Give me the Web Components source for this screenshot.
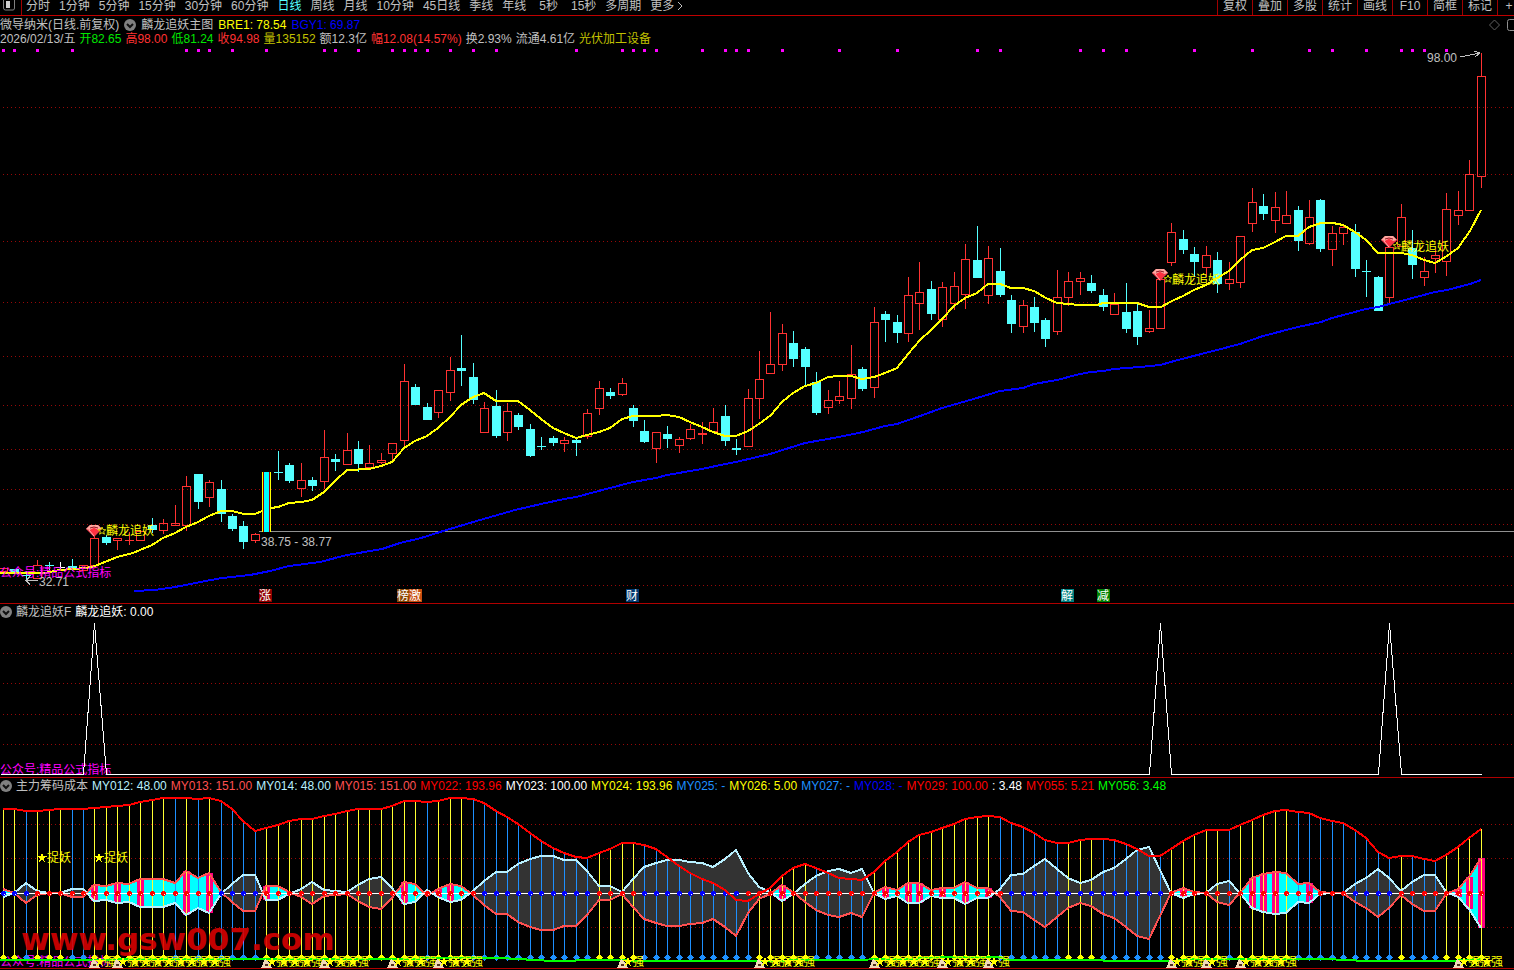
<!DOCTYPE html>
<html lang="zh-CN">
<head>
<meta charset="utf-8">
<title>微导纳米 日线</title>
<style>
  html { background: #000; }
  body { margin: 0; background: #000; color: #c0c0c0; font: 12px/14px "Liberation Sans", "Noto Sans CJK SC", sans-serif; overflow-x: hidden; }
</style>
</head>
<body>
<stock-app></stock-app>
<script>
const define = (name, cls) => customElements.define(name, cls);
class Base extends HTMLElement {
  constructor() {
    super();
    this.attachShadow({ mode: 'open' }).innerHTML = this.constructor.markup;
  }
}

/* ---------- toolbar ---------- */
const periods = ['分时','1分钟','5分钟','15分钟','30分钟','60分钟','日线','周线','月线','10分钟','45日线','季线','年线','5秒','15秒','多周期','更多'];
const tools = ['复权','叠加','多股','统计','画线','F10','简框','标记','+自'];
define('period-bar', class extends Base {
  static markup = `<style>
    :host { display: flex; height: 15px; border-bottom: 1px solid #c00000; overflow: hidden; justify-content: space-between; align-items: flex-start; }
    button { font: inherit; line-height: 10px; color: inherit; background: none; border: 0; padding: 0; margin: 0; white-space: nowrap; }
    .side { width: 21px; height: 15px; border-right: 1px solid #a00000; box-sizing: content-box; }
    .side svg { display: block; }
    .left, nav, .tools { display: flex; }
    nav { gap: 9px; padding-left: 4px; align-items: flex-start; }
    nav button { height: 11px; }
    nav button.wide { padding: 0 4px; }
    nav button[aria-current] { color: #54ffff; }
    nav button svg { vertical-align: -1px; margin-left: 2px; }
    .tools { margin-right: -18px; }
    .tools button { width: 35px; height: 15px; padding-bottom: 3px; border-left: 1px solid #a00000; }
  </style>
  <div class="left"><button class="side" aria-label="侧栏"><svg width="20" height="15"><path d="M3.500 0V8q0 2 2 2H13q1.500 0 1.500-2V0" fill="none" stroke="#808080"/><rect x="6" y="1" width="4" height="7" fill="#d0d0d0"/></svg></button>
  <nav>${periods.map(p => `<button${p === '日线' ? ' aria-current="true"' : ''}${p === '5秒' ? ' class="wide"' : ''}>${p}${p === '更多' ? '<svg width="8" height="10"><path d="M2 1l4 4-4 4" fill="none" stroke="#c0c0c0"/></svg>' : ''}</button>`).join('')}</nav></div>
  <div class="tools">${tools.map(t => `<button>${t}</button>`).join('')}</div>`;
});

/* ---------- coloured value in a header ---------- */
define('data-value', class extends Base {
  static markup = `<style>:host { display: inline-block; white-space: pre; color: var(--tone, #c0c0c0); }</style><slot></slot>`;
  connectedCallback() { const t = this.getAttribute('tone'); if (t) this.style.setProperty('--tone', t); }
});

define('fold-button', class extends Base {
  static markup = `<style>:host { display: block; width: 12px; height: 12px; }
    button { display: block; border: 0; padding: 0; background: none; }
    svg { display: block; }</style>
    <button aria-label="展开"><svg width="12" height="12"><circle cx="6" cy="6" r="6" fill="#808080"/><path d="M3 5l3 3 3-3" fill="none" stroke="#101010" stroke-width="2"/></svg></button>`;
});

define('chart-panel', class extends Base {
  static markup = `<style>
    :host { display: block; border-bottom: 1px solid #b00000; position: relative; }
    header { display: flex; flex-direction: column; }
  </style><header><slot name="head"></slot></header><slot></slot>`;
});
define('head-row', class extends Base {
  static markup = `<style>
    :host { display: flex; align-items: center; height: 16px; gap: 4px; white-space: nowrap; }
    :host([tight]) { height: 14px; }
    :host([top]) { padding-top: 2px; height: 14px; gap: 5px; }
    .end { margin-left: auto; display: flex; }
  </style><slot></slot><span class="end"><slot name="end"></slot></span>`;
});

/* ---------- drawing helpers ---------- */
const COUNT = 130;
const FIRST = 3;
const RIGHT_MARGIN = 33;
const poly = (pts, attrs) => `<polyline points="${pts.map(p => p.join(',')).join(' ')}" fill="none" ${attrs}/>`;
const label = (x, y, s, fill, extra = '') => `<text x="${x}" y="${y}" fill="${fill}" ${extra}>${s}</text>`;
const star = (x, y, r, attrs) => {
  const p = [];
  for (let k = 0; k < 10; k++) {
    const q = k % 2 ? r * 0.42 : r, a = -Math.PI / 2 + k * Math.PI / 5;
    p.push((x + q * Math.cos(a)).toFixed(1) + ',' + (y + q * Math.sin(a)).toFixed(1));
  }
  return `<polygon points="${p.join(' ')}" ${attrs}/>`;
};

class Chart extends Base {
  static markup = `<style>
    :host { display: block; overflow: hidden; }
    svg { display: block; width: 100%; overflow: hidden; shape-rendering: crispEdges; font: 12px "Liberation Sans", "Noto Sans CJK SC", sans-serif; }
  </style><svg></svg>`;
  connectedCallback() {
    this.render();
    new ResizeObserver(() => this.render()).observe(this);
  }
  render() {
    const w = this.clientWidth || innerWidth;
    if (w === this.drawn) return;
    this.drawn = w;
    this.w = w;
    this.step = (w - FIRST - RIGHT_MARGIN) / (COUNT - 1);
    this.scale = (w - FIRST - RIGHT_MARGIN) / 1478;
    const svg = this.shadowRoot.querySelector('svg');
    const [top, height] = this.range;
    svg.setAttribute('height', height);
    svg.setAttribute('viewBox', `0 ${top} ${w} ${height}`);
    svg.innerHTML = this.draw();
  }
  bar(i) { return Math.floor(FIRST + i * this.step + 1 / 3); }
  at(x) { return Math.round(FIRST + (x - FIRST) * this.scale); }
  grid(rows) {
    return rows.map(y => `<line x1="3" x2="${this.w}" y1="${y}.5" y2="${y}.5" stroke="#980808" stroke-dasharray="1 3"/>`).join('');
  }
}

/* each candle: kind, high, body top, body bottom, low */
const candles = `r 568 568 572 572|c 569 569 573 573|c 571 575 576 579|r 560 565 579 579|c 562 565 566 570|w 562 567 568 571|c 559 566 569 571|r 565 565 571 571|r 531 538 566 566|c 535 537 543 545|r 538 538 541 550|r 532 540 541 545|r 531 531 541 541|c 518 525 530 533|r 519 523 531 534|r 505 523 526 526|r 476 486 526 531|c 474 474 502 509|r 480 482 498 507|c 480 489 514 522|c 514 516 529 531|c 521 526 542 549|r 533 534 541 543|x 472 472 532 532|c 451 472 473 480|c 463 465 481 483|r 463 480 489 497|c 477 480 486 491|r 430 457 482 489|c 454 459 462 471|r 433 450 465 465|c 441 449 464 472|r 445 463 468 468|r 453 460 463 464|r 443 443 454 461|r 364 381 441 448|c 384 387 405 405|c 403 407 420 420|r 390 390 413 418|r 357 370 393 401|c 335 368 371 386|c 363 377 400 404|r 402 408 433 433|c 390 406 436 438|r 403 411 433 441|c 413 415 427 430|c 424 429 456 457|c 437 446 447 450|c 436 438 443 446|r 437 440 444 452|c 438 440 443 456|r 409 413 437 439|r 381 388 409 415|c 388 392 396 399|r 378 383 395 396|c 405 408 421 427|c 420 431 442 443|r 432 432 449 463|c 426 434 439 448|r 437 439 446 453|r 424 429 439 440|r 422 433 435 444|r 408 422 432 432|c 405 416 441 446|c 439 448 450 455|r 389 398 447 447|r 351 379 399 419|r 312 364 374 374|r 324 333 365 371|c 331 343 359 367|c 347 349 367 386|c 372 382 413 415|r 390 400 408 414|r 381 396 401 404|r 345 374 399 409|c 367 369 389 391|r 307 322 388 398|c 311 314 320 342|c 315 322 333 343|r 277 295 334 342|r 262 292 304 330|c 281 289 314 320|r 282 287 320 327|r 272 286 304 310|r 244 259 295 309|c 226 260 278 278|r 246 258 296 304|c 248 271 295 297|c 295 300 324 333|r 300 305 327 333|c 297 307 323 332|c 318 320 339 347|r 270 297 332 335|r 272 281 298 306|r 272 278 282 295|c 275 283 291 293|c 289 295 307 311|r 293 304 315 315|c 283 312 329 333|c 303 311 337 345|r 310 328 332 333|r 279 279 329 329|r 223 232 263 266|c 230 239 250 254|c 247 254 262 277|r 246 255 268 277|c 252 260 284 293|r 262 279 284 290|r 236 236 283 288|r 188 202 224 232|c 194 206 214 220|r 192 207 221 233|r 191 215 224 224|c 206 210 241 251|r 200 217 244 245|c 199 200 249 252|r 226 233 250 266|r 225 227 234 245|c 224 232 269 277|c 260 271 272 297|c 276 277 311 311|r 247 247 298 303|r 204 217 247 247|c 230 248 265 279|r 257 271 278 286|r 250 255 259 273|r 193 209 262 276|r 191 210 216 225|r 160 174 211 211|r 53 76 177 188`
  .split('|').map(s => { const [k, ...n] = s.split(' '); return [k, ...n.map(Number)]; });
const pairs = s => s.trim().split(/\s+/).map(p => p.split(',').map(Number));
const fastLine = pairs(`0,573 44,573 60,570 72,569 86,568 95,566 117,557 133,553 152,545 163,538 175,533 186,527 198,522 209,516 221,511 232,511 244,514 255,514 262,511 271,508 278,507 289,503 301,502 312,500 324,492 335,481 347,470 369,469 381,466 392,462 404,448 415,441 427,436 438,428 450,417 461,405 473,397 484,393 496,401 518,401 530,410 541,419 553,428 564,433 576,438 587,435 599,432 610,428 622,419 633,416 656,416 667,415 679,417 690,422 702,427 713,432 725,436 736,436 748,431 759,424 771,415 782,402 793,393 805,386 816,383 828,377 839,376 851,376 862,379 874,377 885,373 897,368 908,354 920,340 931,330 942,319 954,306 965,298 977,293 988,284 1000,284 1011,288 1023,288 1034,291 1046,298 1057,303 1080,305 1097,305 1103,303 1137,303 1149,307 1161,307 1172,301 1183,296 1194,290 1206,285 1217,278 1229,271 1240,260 1252,250 1263,248 1275,242 1286,236 1298,236 1309,227 1321,223 1333,223 1343,225 1355,232 1366,240 1378,253 1401,253 1412,255 1424,260 1435,263 1447,256 1458,248 1470,231 1481,210`);
const slowLine = pairs(`134,591 155,590 175,587 211,580 222,578 250,575 270,571 289,566 320,562 347,555 382,549 400,543 421,538 440,532 480,520 515,510 541,504 564,499 576,497 610,488 633,482 656,478 667,475 702,469 725,464 736,462 770,454 805,443 839,437 863,432 885,426 897,424 920,416 942,408 977,398 1000,391 1023,388 1034,384 1057,380 1080,374 1091,372 1103,371 1114,369 1140,367 1160,365 1178,360 1217,350 1240,344 1263,336 1298,327 1321,322 1332,318 1366,309 1378,307 1401,301 1435,292 1447,290 1470,284 1481,280`);
const topDots = [0,1,3,6,16,17,18,20,23,28,29,31,34,35,36,37,39,41,43,50,54,55,56,57,61,63,64,65,68,73,78,85,87,94,96,98,104,109,114,116,119,122,123,124,126];

define('candle-chart', class extends Chart {
  range = [46, 557];
  gem(x, y) {
    return `<g shape-rendering="auto" transform="translate(${x - 8} ${y - 6})"><path d="M0 4L4 0H12L16 4L8 12Z" fill="#f03848"/><path d="M0 4L4 0H12L16 4L12 5L8 3L4 5Z" fill="#ffa8a0"/><path d="M4 5L8 3L12 5L8 11Z" fill="#ff3040"/><path d="M3 5L8 11" stroke="#ffb0b0" fill="none"/><path d="M4 3Q8 1 12 3" stroke="#901020" fill="none"/></g>`;
  }
  draw() {
    const colours = { r: '#ff3232', c: '#54ffff', w: '#ffffff' };
    let s = this.grid([107, 174, 241, 302, 356, 405, 449, 489, 524, 556, 585]);
    s += topDots.map(i => `<rect x="${this.bar(i) - 1}" y="49" width="3" height="3" fill="#ff00ff"/>`).join('');
    s += `<line x1="${this.at(259)}" x2="${this.w}" y1="531.5" y2="531.5" stroke="#909090"/>`;
    candles.forEach(([k, h, t, b, l], i) => {
      const x = this.bar(i), c = colours[k];
      if (k === 'x') return;
      if (k === 'r' && b - t > 2) {
        s += `<path d="M${x + .5} ${h}V${t}M${x + .5} ${b}V${l}" stroke="${c}"/><rect x="${x - 3.5}" y="${t + .5}" width="8" height="${b - t - 1}" fill="none" stroke="${c}"/>`;
      } else {
        s += `<path d="M${x + .5} ${h}V${l}" stroke="${c}"/><rect x="${x - 4}" y="${t}" width="9" height="${b - t}" fill="${c}"/>`;
      }
    });
    const line = pts => pts.map(([x, y]) => [this.at(x), y]);
    s += poly(line(slowLine), 'stroke="#0000ff" stroke-width="2"');
    s += poly(line(fastLine), 'stroke="#ffff00" stroke-width="2"');
    const g = this.bar(23);
    s += `<rect x="${g - 4}" y="472" width="9" height="60" fill="#ffff00"/><rect x="${g - 3}" y="472" width="7" height="60" fill="#900000"/><rect x="${g - 2}" y="472" width="5" height="60" fill="#00ffff"/>`;
    for (const [i, y] of [[8, 531], [101, 275], [121, 242]]) {
      const x = this.bar(i);
      s += this.gem(x, y) + star(x + 8, y + (i === 8 ? 0 : 4), 4, 'fill="none" stroke="#d8d800" shape-rendering="auto"');
      s += label(x + 12, y + (i === 8 ? 4 : 9), '麟龙追妖', '#ffff00');
    }
    s += label(0, 577, '公众号:精品公式指标', '#ff00ff');
    s += `<path d="M38 580.500H26M30 576.500L26 580.500L30 584.500" stroke="#c0c0c0" fill="none"/>` + label(39, 586, '32.71', '#c0c0c0');
    s += label(this.at(261), 546, '38.75 - 38.77', '#c0c0c0');
    const e = this.bar(129);
    s += label(e - 54, 62, '98.00', '#c0c0c0') + `<path d="M${e - 21} 57L${e - 1} 53M${e - 7} 51L${e - 1} 53L${e - 6} 57" stroke="#c0c0c0" fill="none"/>`;
    for (const [x, t, c] of [[259, '涨', '#900000'], [397, '榜', '#8a4500'], [409, '激', '#c84e10'], [626, '财', '#003870'], [1061, '解', '#008080'], [1097, '减', '#008000']]) {
      s += `<rect x="${this.at(x)}" y="589" width="13" height="13" fill="${c}"/>` + label(this.at(x), 600, t, '#ffffff');
    }
    return s;
  }
});

define('signal-chart', class extends Chart {
  range = [620, 157];
  draw() {
    const pts = [[0, 774]];
    for (const i of [8, 101, 121]) pts.push([this.bar(i - 1), 774], [this.bar(i), 623], [this.bar(i + 1), 774]);
    pts.push([this.bar(129), 774]);
    return this.grid([653, 683, 714, 744]) + label(0, 774, '公众号:精品公式指标', '#ff00ff')
      + `<g transform="translate(.5 .5)">${poly(pts, 'stroke="#ffffff"')}</g>`;
  }
});

/* cost curve, spread (positive = grey, negative = cyan) and bar colours */
const cost = [809,809,811,811,810,809,809,809,808,807,806,805,802,800,798,798,798,799,798,801,809,821,831,828,825,821,819,819,816,814,811,809,809,809,806,801,801,802,801,798,798,799,803,811,817,824,833,841,848,853,857,858,853,849,843,843,845,849,857,866,873,879,883,890,900,901,894,888,876,868,864,868,873,878,879,880,872,861,852,842,835,832,828,824,819,817,816,817,823,827,833,840,843,843,840,839,839,840,844,849,856,856,849,841,835,830,830,830,825,820,815,811,810,812,813,818,821,823,830,838,852,858,856,856,859,861,855,847,838,829];
const spread = [-4,0,10,2,0,0,4,4,-8,-7,-10,-9,-14,-14,-14,-10,-22,-15,-20,-1,9,18,18,-7,-7,-1,4,11,3,2,1,8,14,16,5,-11,-9,3,-4,-9,-7,2,12,21,21,29,34,37,37,33,33,22,7,7,1,14,26,30,33,33,31,30,26,34,43,20,6,1,-8,-1,9,17,22,24,20,24,0,-6,-3,-10,-10,-3,-5,-5,-11,-5,-5,4,18,19,27,34,24,15,10,13,21,25,34,43,46,23,0,-5,-1,0,9,12,0,-15,-19,-21,-20,-9,-10,-1,0,0,9,15,24,15,2,11,18,18,1,-4,-16,-35];
const pinkBars = [8,10,12,16,18,23,35,38,39,68,77,79,80,82,84,86,103,109,110,111,114,127,128,129];
const inRanges = (i, list) => list.some(([a, b]) => i >= a && i <= b);
const blueStems = [[2,2],[6,7],[15,15],[17,17],[19,22],[37,37],[41,51],[56,65],[71,75],[87,92],[96,101],[107,107],[113,121],[123,125]];
const blueDots = [[0,2],[19,22],[42,51],[56,64],[88,101],[118,121]];
const strong = [8,10,11,12,13,14,15,16,17,18,23,24,25,26,28,29,30,34,35,36,38,39,40,54,66,67,68,69,76,77,78,79,80,82,83,84,86,102,103,105,108,109,110,111,127,128,129];

define('cost-chart', class extends Chart {
  range = [794, 174];
  lobe(sign, fill) {
    const edge = [];
    spread.forEach((h, i) => {
      const x = this.bar(i);
      if (i && h * spread[i - 1] < 0) {
        const p = this.bar(i - 1), q = Math.abs(spread[i - 1]);
        edge.push([Math.round(p + (x - p) * q / (q + Math.abs(h))), 0]);
      }
      edge.push([x, Math.max(0, h * sign)]);
    });
    return `<polygon fill="${fill}" points="${edge.map(([x, h]) => `${x},${893 - h}`).join(' ')} ${edge.slice().reverse().map(([x, h]) => `${x},${893 + h}`).join(' ')}"/>`;
  }
  draw() {
    const mid = 893;
    let s = this.grid([824, 858, 927]);
    s += label(0, 966, '公众号:精品公式指标', '#ff00ff');
    s += this.lobe(1, '#333333') + this.lobe(-1, '#00ffff');
    s += pinkBars.map(i => { const h = Math.abs(spread[i]); return `<rect x="${this.bar(i) - 3}" y="${mid - h}" width="7" height="${2 * h}" fill="#ff0080"/>`; }).join('');
    cost.forEach((y, i) => {
      const blue = inRanges(i, blueStems), x = this.bar(i);
      s += `<line x1="${x + .5}" x2="${x + .5}" y1="${y}" y2="957" stroke="${blue ? '#1e90ff' : '#ffff32'}"/>`;
      s += `<path d="M${x - 3} 957.500L${x + .5} 954L${x + 4} 957.500L${x + .5} 961Z" fill="${blue ? '#1e90ff' : '#ffff00'}"/>`;
    });
    s += poly(spread.map((h, i) => [this.bar(i), mid - h]), 'stroke="#b8f0ff" stroke-width="2"');
    s += poly(spread.map((h, i) => [this.bar(i), mid + h]), 'stroke="#ff5050" stroke-width="2"');
    s += `<line x1="0" x2="${this.bar(129)}" y1="893.5" y2="893.5" stroke="#ffffff"/>`;
    spread.forEach((h, i) => {
      const x = this.bar(i), blue = inRanges(i, blueDots);
      s += `<rect x="${x - 2}" y="892" width="5" height="3" fill="${blue ? '#0000ff' : '#ff0000'}"/><rect x="${x - 1}" y="891" width="3" height="5" fill="${blue ? '#0000ff' : '#ff0000'}"/><rect x="${x + 1}" y="894" width="1" height="1" fill="#ffffff"/>`;
    });
    s += poly(cost.map((y, i) => [this.bar(i), y]), 'stroke="#ff0000" stroke-width="2"');
    s += poly(pairs('0,960 240,959 400,959 440,958 500,958 553,961 600,960 656,961 750,961 828,960 910,959 943,957 1000,957 1007,960 1080,960 1126,961 1172,961 1195,959 1230,959 1326,959 1366,961 1450,961 1481,959').map(([x, y]) => [this.at(x), y]), 'stroke="#00ff00" stroke-width="2"');
    for (const x of [41, 98]) s += star(this.at(x) + 1, 858, 5, 'fill="#ffff00"') + label(this.at(x) + 6, 862, '捉妖', '#ffff00');
    strong.forEach(i => {
      const x = this.bar(i);
      if (!strong.includes(i - 1)) s += `<path d="M${x - 5} 968L${x - 1} 959L${x + 4} 964L${x + 6} 968Z" fill="#f0d8b8"/><rect x="${x - 1}" y="964" width="3" height="2" fill="#503020"/>`;
      s += label(x + 10, 966, '强', '#ffff00') + star(x + 6, 962, 5, 'fill="#ffff00"');
    });
    s += label(21, 950, 'www.gsw007.com', '#d80000', 'opacity=".9" style="font:bold 31px \'DejaVu Sans\',sans-serif"');
    return s;
  }
});

/* ---------- page ---------- */
const v = (text, tone) => `<data-value${tone ? ` tone="${tone}"` : ''}>${text}</data-value>`;
define('stock-app', class extends Base {
  static markup = `<style>
    :host { display: block; }
    main { display: flex; flex-direction: column; }
    svg { display: block; }
  </style>
  <period-bar></period-bar>
  <main>
    <chart-panel>
      <head-row slot="head" top>${v('微导纳米(日线.前复权)')}<fold-button></fold-button>${v('麟龙追妖主图')}${v('BRE1: 78.54', '#ffff00')}${v('BGY1: 69.87', '#0000ff')}
        <svg slot="end" width="26" height="14"><path d="M6.500 2L11.500 7L6.500 12L1.500 7Z" fill="none" stroke="#606060"/><rect x="19.500" y="1.500" width="12" height="11" rx="2" fill="none" stroke="#909090"/></svg></head-row>
      <head-row slot="head" tight>${v('2026/02/13/五')}${v('开82.65', '#00e600')}${v('高98.00', '#ff3232')}${v('低81.24', '#00e600')}${v('收94.98', '#ff3232')}${v('量135152', '#c0c000')}${v('额12.3亿')}${v('幅12.08(14.57%)', '#ff3232')}${v('换2.93%')}${v('流通4.61亿')}${v('光伏加工设备', '#c0c000')}</head-row>
      <candle-chart></candle-chart>
    </chart-panel>
    <chart-panel>
      <head-row slot="head"><fold-button></fold-button>${v('麟龙追妖F')}${v('麟龙追妖: 0.00', '#ffffff')}</head-row>
      <signal-chart></signal-chart>
    </chart-panel>
    <chart-panel>
      <head-row slot="head"><fold-button></fold-button>${v('主力筹码成本')}${v('MY012: 48.00', '#b8f0ff')}${v('MY013: 151.00', '#ff5050')}${v('MY014: 48.00', '#b8f0ff')}${v('MY015: 151.00', '#ff5050')}${v('MY022: 193.96', '#ff0000')}${v('MY023: 100.00', '#ffffff')}${v('MY024: 193.96', '#ffff00')}${v('MY025: -', '#1e90ff')}${v('MY026: 5.00', '#ffff00')}${v('MY027: -', '#1e90ff')}${v('MY028: -', '#0000ff')}${v('MY029: 100.00', '#ff0000')}${v(': 3.48', '#ffffff')}${v('MY055: 5.21', '#ff0000')}${v('MY056: 3.48', '#00ff00')}</head-row>
      <cost-chart></cost-chart>
    </chart-panel>
  </main>`;
});
</script>
</body>
</html>
